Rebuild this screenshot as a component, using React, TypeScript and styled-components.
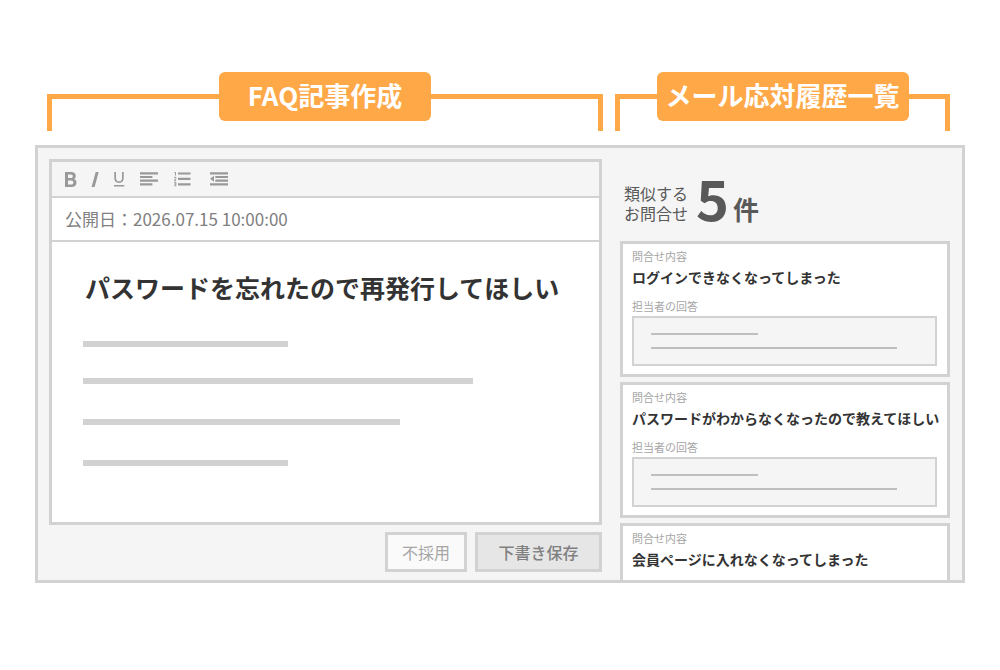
import React from "react";
import styled, { createGlobalStyle } from "styled-components";

const c = {
  orange: "#ffa848",
  line: "#d2d2d2",
  rule: "#bfbfbf",
  panel: "#f5f5f5",
  icon: "#999999",
  ink: "#333333",
};

const GlobalStyle = createGlobalStyle`
  *, *::before, *::after { box-sizing: border-box; }
  body {
    margin: 0;
    background: #fff;
    color: ${c.ink};
    font-family: "Noto Sans CJK JP", "Noto Sans", sans-serif;
  }
  h1, h2, h3, p { margin: 0; }
`;

const Page = styled.main`
  padding: 72px 35px 40px;
`;

const Headings = styled.div`
  display: grid;
  grid-template-columns: minmax(0, 556fr) minmax(0, 335fr);
  gap: 12px;
  padding: 0 15px 0 12px;
  margin-bottom: 14px;
`;

const Bracket = styled.div`
  display: flex;
  height: 59px;
`;

const Arm = styled.span<{ $side: "left" | "right" }>`
  flex: 1;
  margin-top: 22px;
  border-top: 5px solid ${c.orange};
  border-${(p) => p.$side}: 5px solid ${c.orange};
`;

const Badge = styled.h2<{ $wide?: boolean }>`
  height: 49px;
  padding: 0 ${(p) => (p.$wide ? 9 : 29)}px;
  border-radius: 6px;
  background: ${c.orange};
  color: #fff;
  font-size: 26px;
  font-weight: 700;
  line-height: 46px;
  white-space: nowrap;
`;

const Frame = styled.div`
  display: grid;
  grid-template-columns: minmax(0, 553fr) minmax(0, 330fr);
  gap: 18px;
  padding: 11px 12px 0 11px;
  border: 3px solid ${c.line};
  background: ${c.panel};
`;

const EditorColumn = styled.section`
  display: flex;
  flex-direction: column;
  gap: 7px;
  padding-bottom: 8px;
`;

const Editor = styled.div`
  border: 3px solid ${c.line};
  background: #fff;
`;

const Toolbar = styled.div`
  display: flex;
  align-items: center;
  height: 36px;
  padding-left: 7px;
  border-bottom: 2px solid ${c.line};
  background: ${c.panel};
`;

const Tool = styled.button<{ $wide?: boolean }>`
  display: flex;
  justify-content: center;
  width: ${(p) => (p.$wide ? 35 : 24)}px;
  padding: 0;
  border: 0;
  background: none;
  color: ${c.icon};
`;

const PublishDate = styled.p`
  height: 44px;
  padding-left: 13px;
  border-bottom: 2px solid ${c.line};
  color: #808080;
  font-size: 17px;
  line-height: 42px;
`;

const Body = styled.article`
  padding: 26px 28px 56px 31px;
`;

const Title = styled.h1`
  padding-left: 2px;
  font-size: 25px;
  font-weight: 700;
  line-height: 38px;
  white-space: nowrap;
  margin-bottom: 35px;
`;

const Paragraphs = styled.div`
  display: grid;
  gap: 35px;
`;

const Paragraph = styled.div`
  display: grid;
  gap: 31px;
`;

const Bar = styled.div<{ $width: number }>`
  width: ${(p) => p.$width}%;
  height: 6px;
  background: ${c.line};
`;

const Actions = styled.div`
  display: flex;
  justify-content: flex-end;
  gap: 8px;
`;

const Action = styled.button<{ $primary?: boolean }>`
  height: 40px;
  width: ${(p) => (p.$primary ? 127 : 82)}px;
  padding: 0;
  border: 3px solid ${c.line};
  background: ${(p) => (p.$primary ? "#e6e6e6" : "#fafafa")};
  color: ${(p) => (p.$primary ? "#808080" : "#a6a6a6")};
  font-family: inherit;
  font-size: 16px;
  font-weight: ${(p) => (p.$primary ? 500 : 400)};
  line-height: 24px;
`;

const History = styled.section`
  display: flex;
  flex-direction: column;
`;

const Summary = styled.div`
  display: flex;
  align-items: flex-end;
  height: 82px;
  padding: 0 0 18px 4px;
  color: #595959;
`;

const SummaryLabel = styled.p`
  font-size: 16px;
  line-height: 20px;
`;

const Count = styled.strong`
  margin-left: 8px;
  font-size: 56px;
  line-height: 52px;
`;

const Unit = styled.span`
  margin-left: 4px;
  font-size: 26px;
  font-weight: 700;
  line-height: 28px;
`;

const Cards = styled.div`
  flex: 1;
  display: flex;
  flex-direction: column;
  gap: 5px;
`;

const Card = styled.article`
  padding: 4px 10px 8px 9px;
  border: 3px solid ${c.line};
  background: #fff;

  &:last-child {
    flex: 1;
    padding-bottom: 0;
    border-bottom: 0;
  }
`;

const Label = styled.p`
  color: #a6a6a6;
  font-size: 11px;
  line-height: 17px;
`;

const Question = styled.h3`
  font-size: 14px;
  font-weight: 700;
  line-height: 24px;
  white-space: nowrap;
`;

const Answer = styled.div`
  padding-top: 9px;
`;

const Reply = styled.div`
  display: grid;
  align-content: start;
  gap: 12px;
  height: 50px;
  margin-top: 1px;
  padding: 15px 17px;
  border: 2px solid ${c.line};
  background: ${c.panel};
`;

const Rule = styled.div<{ $width: number }>`
  width: ${(p) => p.$width}%;
  height: 2px;
  background: ${c.rule};
`;

const Glyph = ({ children }: { children: React.ReactNode }) => (
  <svg width="20" height="20" viewBox="0 0 20 20" fill="currentColor" aria-hidden="true">
    {children}
  </svg>
);

const tools = [
  {
    name: "太字",
    art: (
      <path
        fillRule="evenodd"
        d="M4 3h6.2c2.8 0 4.6 1.500 4.600 3.900 0 1.500-.8 2.600-2 3.200 1.700.5 2.700 1.800 2.700 3.600 0 2.700-2 4.300-5.100 4.300H4zM7 5.400v3.600h2.800c1.300 0 2-.7 2-1.800s-.7-1.800-2-1.800zM7 11.400v4.200h3.100c1.500 0 2.300-.8 2.300-2.100s-.8-2.100-2.300-2.100z"
      />
    ),
  },
  { name: "斜体", art: <path d="M10.700 3h3L9.600 18h-3z" /> },
  {
    name: "下線",
    art: (
      <path d="M5.300 3h1.700v6.200c0 2 1.100 3.100 3 3.100s3-1.100 3-3.100V3h1.700v6.300c0 2.900-1.800 4.600-4.700 4.600s-4.700-1.700-4.700-4.600zM5 16h10.300v1.500H5z" />
    ),
  },
  {
    name: "左揃え",
    wide: true,
    art: <path d="M1 3.200h18v2.200H1zM1 6.900h12.400v2.200H1zM1 10.500h18v2.200H1zM1 14.200h12.400v2.200H1z" />,
  },
  {
    name: "番号付きリスト",
    wide: true,
    art: (
      <>
        <path d="M4 3.400h12.500v2.200H4zM4 8.800h12.500v2.200H4zM4 14.200h12.500v2.200H4z" />
        <path
          d="M.3 3.500h1.200V6.500M.1 8.300h1.700v1.300l-1.500 1.800h1.700M.1 13.200h1.700v3.600H.1M.3 15h1.500"
          fill="none"
          stroke="currentColor"
        />
      </>
    ),
  },
  {
    name: "インデント解除",
    wide: true,
    art: (
      <path d="M1 3.200h18v2.200H1zM6.300 6.900h12.700v2.200H6.300zM6.300 10.500h12.700v2.200H6.300zM1 14.200h18v2.200H1zM1 9.800l4-3v6z" />
    ),
  },
];

const cards = [
  { question: "ログインできなくなってしまった", answered: true },
  { question: "パスワードがわからなくなったので教えてほしい", answered: true },
  { question: "会員ページに入れなくなってしまった", answered: false },
];

const Heading = ({ text, wide }: { text: string; wide?: boolean }) => (
  <Bracket>
    <Arm $side="left" />
    <Badge $wide={wide}>{text}</Badge>
    <Arm $side="right" />
  </Bracket>
);

export default function App() {
  return (
    <Page>
      <GlobalStyle />
      <Headings>
        <Heading text="FAQ記事作成" />
        <Heading text="メール応対履歴一覧" wide />
      </Headings>
      <Frame>
        <EditorColumn>
          <Editor>
            <Toolbar>
              {tools.map((t) => (
                <Tool key={t.name} type="button" aria-label={t.name} $wide={t.wide}>
                  <Glyph>{t.art}</Glyph>
                </Tool>
              ))}
            </Toolbar>
            <PublishDate>公開日：2026.07.15 10:00:00</PublishDate>
            <Body>
              <Title>パスワードを忘れたので再発行してほしい</Title>
              <Paragraphs>
                <Paragraph>
                  <Bar $width={42} />
                  <Bar $width={80} />
                </Paragraph>
                <Bar $width={65} />
                <Bar $width={42} />
              </Paragraphs>
            </Body>
          </Editor>
          <Actions>
            <Action type="button">不採用</Action>
            <Action type="button" $primary>
              下書き保存
            </Action>
          </Actions>
        </EditorColumn>
        <History>
          <Summary>
            <SummaryLabel>
              類似する
              <br />
              お問合せ
            </SummaryLabel>
            <Count>5</Count>
            <Unit>件</Unit>
          </Summary>
          <Cards>
            {cards.map((card) => (
              <Card key={card.question}>
                <Label>問合せ内容</Label>
                <Question>{card.question}</Question>
                {card.answered && (
                  <Answer>
                    <Label>担当者の回答</Label>
                    <Reply>
                      <Rule $width={40} />
                      <Rule $width={92} />
                    </Reply>
                  </Answer>
                )}
              </Card>
            ))}
          </Cards>
        </History>
      </Frame>
    </Page>
  );
}
